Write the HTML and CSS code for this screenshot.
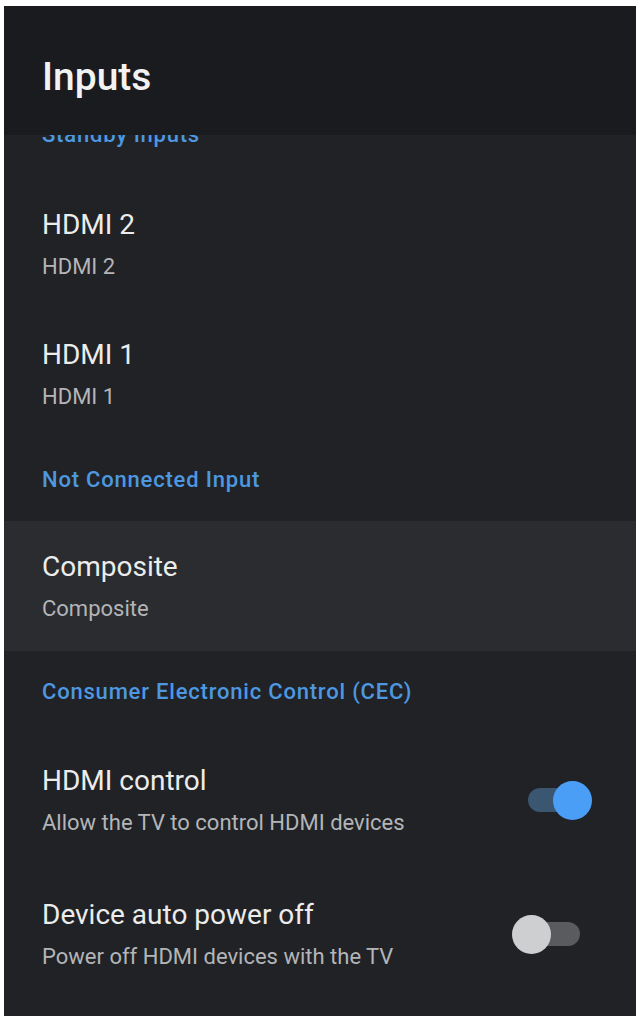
FILE: index.html
```html
<!DOCTYPE html>
<html lang="en">
<head>
    <meta charset="UTF-8">
    <meta name="viewport" content="width=device-width, initial-scale=1.0">
    <title>Inputs</title>
    <link rel="stylesheet" href="styles.css">
</head>
<body>
    <div class="screen">
        <header class="panel-header">
            <h1>Inputs</h1>
        </header>

        <main class="settings-list">
            <div class="section-label first">Standby inputs</div>

            <div class="item">
                <div class="item-text">
                    <div class="item-title">HDMI 2</div>
                    <div class="item-sub">HDMI 2</div>
                </div>
            </div>

            <div class="item">
                <div class="item-text">
                    <div class="item-title">HDMI 1</div>
                    <div class="item-sub">HDMI 1</div>
                </div>
            </div>

            <div class="section-label">Not Connected Input</div>

            <div class="item focused">
                <div class="item-text">
                    <div class="item-title">Composite</div>
                    <div class="item-sub">Composite</div>
                </div>
            </div>

            <div class="section-label">Consumer Electronic Control (CEC)</div>

            <div class="item switch-item">
                <div class="item-text">
                    <div class="item-title">HDMI control</div>
                    <div class="item-sub">Allow the TV to control HDMI devices</div>
                </div>
                <div class="toggle on">
                    <div class="track"></div>
                    <div class="thumb"></div>
                </div>
            </div>

            <div class="item switch-item">
                <div class="item-text">
                    <div class="item-title">Device auto power off</div>
                    <div class="item-sub">Power off HDMI devices with the TV</div>
                </div>
                <div class="toggle">
                    <div class="track"></div>
                    <div class="thumb"></div>
                </div>
            </div>
        </main>
    </div>
</body>
</html>
```

FILE: styles.css
```css
* {
    margin: 0;
    padding: 0;
    box-sizing: border-box;
    font-family: Roboto, 'Noto Sans', sans-serif;
}

body {
    background: #fff;
}

.screen {
    margin: 6px 6px 0 4px;
    height: 1010px;
    display: flex;
    flex-direction: column;
    background: #202226;
    overflow: hidden;
}

.panel-header {
    height: 129px;
    padding: 48px 38px 0;
    background: #191b1e;
}

.panel-header h1 {
    font-size: 39px;
    line-height: 46px;
    font-weight: 500;
    color: #f2f2f2;
}

.settings-list {
    flex: 1;
    overflow: hidden;
}

.section-label {
    padding: 28px 38px;
    font-size: 22px;
    line-height: 26px;
    font-weight: 500;
    letter-spacing: 0.8px;
    color: #4d98e0;
}

/* scrolled list: the first label sits half under the header */
.section-label.first {
    margin-top: -41px;
    padding-bottom: 31px;
}

.item {
    display: flex;
    align-items: center;
    justify-content: space-between;
    padding: 29px 44px 29px 38px;
}

.item.focused {
    background: #2a2c30;
}

.switch-item {
    padding-top: 31px;
    padding-bottom: 31px;
}

.item-text {
    display: flex;
    flex-direction: column;
    gap: 12px;
}

.item-title {
    font-size: 28px;
    line-height: 34px;
    color: #ececec;
}

.item-sub {
    font-size: 22px;
    line-height: 26px;
    color: #b3b5b8;
}

/* Switch */
.toggle {
    position: relative;
    width: 80px;
    height: 40px;
    flex-shrink: 0;
}

.toggle .track {
    position: absolute;
    left: 12px;
    right: 12px;
    top: 8px;
    height: 24px;
    border-radius: 12px;
    background: #595b5e;
}

.toggle .thumb {
    position: absolute;
    left: 0;
    top: 1px;
    width: 39px;
    height: 39px;
    border-radius: 50%;
    background: #cdcfd0;
}

.toggle.on .track {
    left: 16px;
    background: #3b5670;
}

.toggle.on .thumb {
    left: auto;
    right: 0;
    background: #4a9ef5;
}
```
